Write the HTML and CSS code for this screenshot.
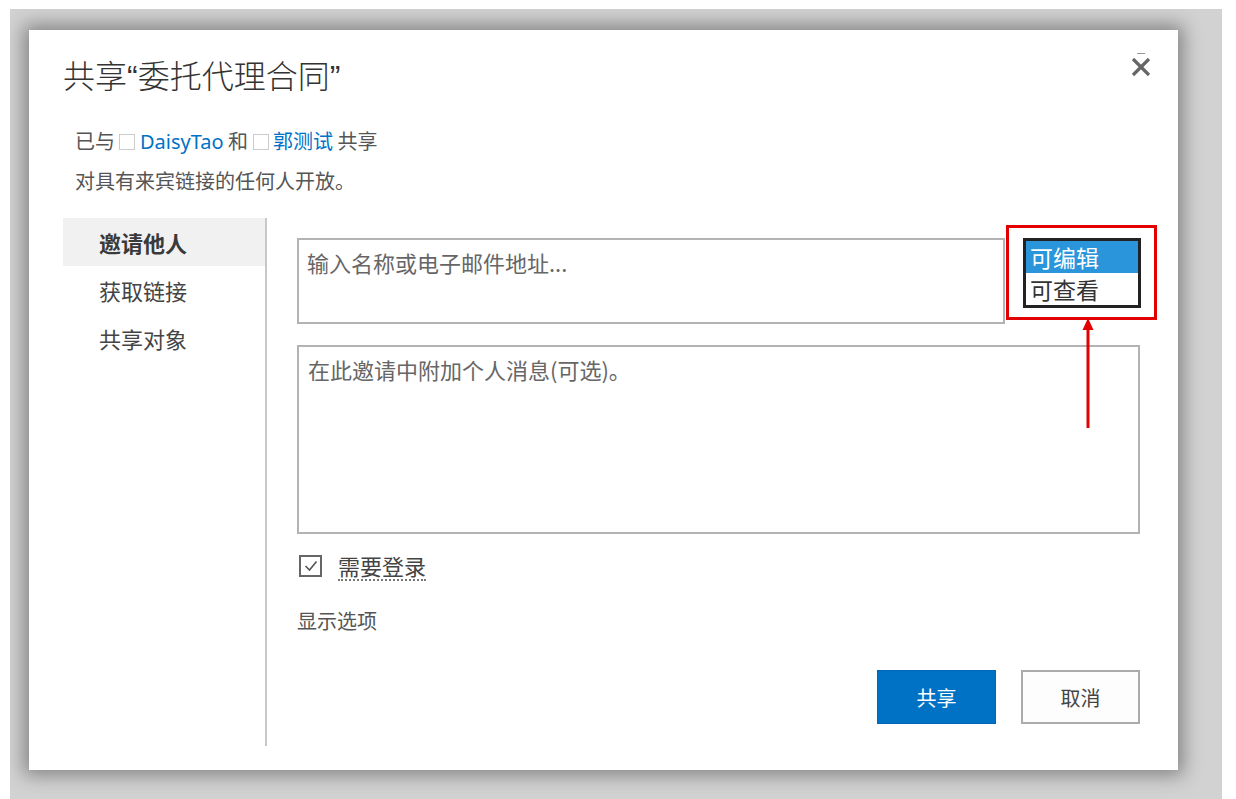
FILE: index.html
```html
<!DOCTYPE html>
<html lang="zh-CN">
<head>
<meta charset="utf-8">
<title>共享</title>
<link rel="stylesheet" href="styles.css">
</head>
<body>
<div class="overlay">
  <div class="dialog">
    <div class="header">
      <h1 class="title">共享“委托代理合同”</h1>
      <button class="close" aria-label="关闭">
        <svg width="22" height="26" viewBox="0 0 22 26">
          <line x1="7" y1="1.5" x2="15" y2="1.5" stroke="#999" stroke-width="1"/>
          <line x1="3" y1="7" x2="19" y2="23" stroke="#666" stroke-width="3.2"/>
          <line x1="19" y1="7" x2="3" y2="23" stroke="#666" stroke-width="3.2"/>
        </svg>
      </button>
    </div>
    <div class="info">
      <div class="info-line">已与 <span class="sq"></span> <a class="name latin">DaisyTao</a> 和 <span class="sq"></span> <a class="name">郭测试</a> 共享</div>
      <div class="info-line">对具有来宾链接的任何人开放。</div>
    </div>
    <div class="body">
      <nav class="nav">
        <div class="nav-item active">邀请他人</div>
        <div class="nav-item">获取链接</div>
        <div class="nav-item">共享对象</div>
      </nav>
      <div class="content">
        <div class="invite-row">
          <div class="field field-name"><span class="ph">输入名称或电子邮件地址...</span></div>
          <div class="listbox">
            <div class="opt selected">可编辑</div>
            <div class="opt">可查看</div>
          </div>
        </div>
        <div class="field field-msg"><span class="ph">在此邀请中附加个人消息(可选)。</span></div>
        <label class="check-row">
          <span class="checkbox">
            <svg width="18" height="18" viewBox="0 0 18 18"><polyline points="3.5,9 7.5,13 14.5,4.5" fill="none" stroke="#555" stroke-width="1.6"/></svg>
          </span>
          <span class="check-label">需要登录</span>
        </label>
        <div class="options">显示选项</div>
        <div class="buttons">
          <button class="btn btn-primary">共享</button>
          <button class="btn btn-default">取消</button>
        </div>
        <div class="annot-box"></div>
        <svg class="annot-arrow" width="16" height="112" viewBox="0 0 16 112">
          <polygon points="8,0 2.5,12 13.5,12" fill="#e30000"/>
          <line x1="8" y1="10" x2="8" y2="110" stroke="#e30000" stroke-width="3"/>
        </svg>
      </div>
    </div>
  </div>
</div>
</body>
</html>
```
FILE: styles.css
```css
* { box-sizing: border-box; }
html, body {
  margin: 0;
  padding: 0;
  background: #ffffff;
  height: 799px;
  overflow: hidden;
}
body {
  font-family: "Noto Sans CJK SC", "Noto Sans", sans-serif;
  color: #444;
}
.overlay {
  margin: 9px 14px 0 10px;
  height: 790px;
  background: #d2d2d2;
  padding: 21px 0 0 19px;
  overflow: hidden;
}
.dialog {
  width: 1149px;
  height: 740px;
  background: #fff;
  box-shadow: 0 0 18px 5px rgba(0,0,0,0.38);
  padding: 0 26px 0 34px;
  display: flex;
  flex-direction: column;
}
.header {
  display: flex;
  justify-content: space-between;
  align-items: flex-start;
  padding-top: 27px;
}
.title {
  margin: 0;
  font-family: "Liberation Sans", "Noto Sans CJK SC", sans-serif;
  font-weight: 300;
  font-size: 32px;
  line-height: 40px;
  color: #333;
}
.close {
  border: 0;
  background: none;
  padding: 0;
  margin: -5px 0 0 0;
  width: 22px;
  height: 26px;
  cursor: pointer;
}
.info {
  margin-top: 24px;
  padding-left: 12px;
}
.info-line {
  font-size: 20px;
  line-height: 40px;
  height: 40px;
  color: #555;
  white-space: pre;
}
.sq {
  display: inline-block;
  width: 16px;
  height: 16px;
  border: 1.5px solid #ccc;
  vertical-align: -1px;
}
.name {
  color: #0072c6;
  text-decoration: none;
}
.latin {
  font-family: "Noto Sans", "Open Sans", sans-serif;
}
.body {
  margin-top: 17px;
  display: flex;
  height: 528px;
}
.nav {
  width: 204px;
  border-right: 2px solid #c8c8c8;
  flex: none;
}
.nav-item {
  height: 48px;
  line-height: 48px;
  padding-left: 36px;
  font-size: 22px;
  color: #444;
}
.nav-item.active {
  background: #f1f1f1;
  font-weight: 700;
  color: #3a3a3a;
}
.content {
  position: relative;
  flex: 1;
  padding: 20px 0 0 30px;
}
.invite-row {
  display: flex;
  align-items: flex-start;
}
.field {
  border: 2px solid #b3b3b3;
  background: #fff;
  padding: 4px 8px;
}
.ph {
  font-size: 22px;
  line-height: 36px;
  color: #666;
}
.field-name {
  width: 708px;
  height: 86px;
}
.listbox {
  margin-left: 18px;
  width: 118px;
  height: 70px;
  border: 3px solid #222;
  padding: 0;
}
.opt {
  height: 32px;
  line-height: 32px;
  font-size: 23px;
  padding-left: 4px;
  color: #333;
}
.opt.selected {
  background: #2a95da;
  color: #fff;
}
.field-msg {
  margin-top: 21px;
  width: 843px;
  height: 189px;
  padding-left: 9px;
}
.check-row {
  display: flex;
  align-items: center;
  margin-top: 19px;
  margin-left: 2px;
  height: 26px;
}
.checkbox {
  width: 23px;
  height: 22px;
  border: 2px solid #666;
  display: flex;
  align-items: center;
  justify-content: center;
}
.check-label {
  margin-left: 16px;
  font-size: 22px;
  line-height: 26px;
  color: #444;
  border-bottom: 2px dotted #777;
  padding-bottom: 1px;
}
.options {
  margin-top: 27px;
  font-size: 20px;
  line-height: 30px;
  color: #555;
}
.buttons {
  margin-top: 34px;
  width: 843px;
  display: flex;
  justify-content: flex-end;
  gap: 25px;
}
.btn {
  width: 119px;
  height: 54px;
  font-family: "Noto Sans CJK SC", sans-serif;
  font-size: 20px;
  cursor: pointer;
}
.btn-primary {
  background: #0072c6;
  border: 1px solid #0067b8;
  color: #fff;
}
.btn-default {
  background: #fdfdfd;
  border: 2px solid #ababab;
  color: #444;
}
.annot-box {
  position: absolute;
  left: 739px;
  top: 7px;
  width: 151px;
  height: 95px;
  border: 3px solid #e30000;
}
.annot-arrow {
  position: absolute;
  left: 813px;
  top: 100px;
}
```
